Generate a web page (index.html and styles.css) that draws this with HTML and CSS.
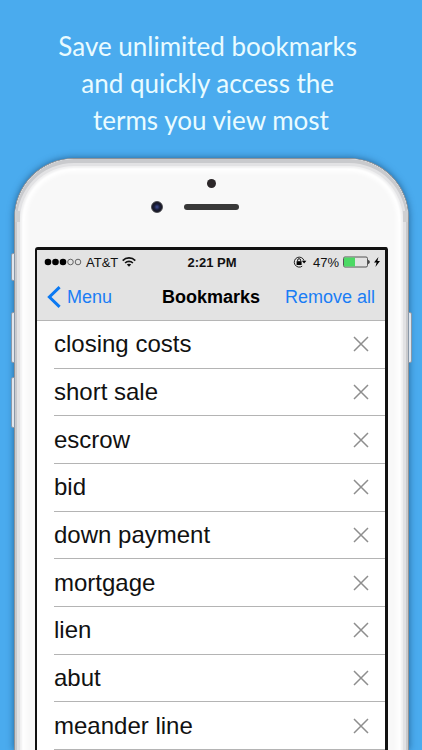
FILE: index.html
```html
<!DOCTYPE html>
<html lang="en">
<head>
    <meta charset="UTF-8">
    <meta name="viewport" content="width=device-width, initial-scale=1.0">
    <title>Bookmarks</title>
    <link rel="stylesheet" href="styles.css">
</head>
<body>
    <h1 class="headline">Save unlimited bookmarks&nbsp;<br>and quickly access the&nbsp;<br>terms you view most</h1>

    <main class="phone">
        <div class="rim"></div>
        <span class="side-button mute"></span>
        <span class="side-button volume-up"></span>
        <span class="side-button volume-down"></span>
        <span class="side-button power"></span>
        <span class="antenna antenna-left"></span>
        <span class="antenna antenna-right"></span>

        <div class="bezel">
            <span class="sensor"></span>
            <div class="earpiece">
                <span class="camera"></span>
                <span class="speaker"></span>
            </div>
        </div>

        <div class="screen">
            <header class="top-bar">
                <div class="status">
                    <div class="status-left">
                        <svg width="38" height="8" viewBox="0 0 38 8">
                            <circle cx="4" cy="4" r="3.3"/>
                            <circle cx="11.5" cy="4" r="3.3"/>
                            <circle cx="19" cy="4" r="3.3"/>
                            <circle cx="26.5" cy="4" r="2.8" fill="none" stroke="#444" stroke-width="0.8"/>
                            <circle cx="34" cy="4" r="2.8" fill="none" stroke="#444" stroke-width="0.8"/>
                        </svg>
                        <span class="carrier">AT&amp;T</span>
                        <svg width="14" height="10" viewBox="0 0 14 10" fill="none" stroke="#111" stroke-width="1.6">
                            <path d="M0.7 3.6 C4.2 0 9.8 0 13.3 3.6"/>
                            <path d="M3.1 6 C5.3 3.8 8.7 3.8 10.9 6"/>
                            <path d="M7 9.8 L4.8 7.6 C6 6.4 8 6.4 9.2 7.6 Z" fill="#111" stroke="none"/>
                        </svg>
                    </div>
                    <span class="time">2:21 PM</span>
                    <div class="status-right">
                        <svg width="14" height="12" viewBox="0 0 14 12">
                            <path d="M11 4.5 A5 5 0 1 0 9.2 10.2" fill="none" stroke="#222" stroke-width="1"/>
                            <path d="M8.8 4.8 H13.4 L11.1 7.6 Z"/>
                            <rect x="3.6" y="5.2" width="5" height="3.8"/>
                            <path d="M4.6 5.4 V4.2 A1.5 1.5 0 0 1 7.6 4.2 V5.4" fill="none" stroke="#111" stroke-width="1"/>
                        </svg>
                        <span class="percent">47%</span>
                        <svg width="27" height="12" viewBox="0 0 27 12">
                            <rect x="0.5" y="1" width="24" height="10" rx="1.5" fill="none" stroke="#555" stroke-width="1"/>
                            <rect x="1" y="1.5" width="11" height="9" fill="#4cd964"/>
                            <path d="M25.3 4 C27 4.4 27 7.6 25.3 8 Z"/>
                        </svg>
                        <svg width="6" height="10" viewBox="0 0 6 10">
                            <path d="M4.4 0 L0 5.6 H2.6 L1.4 10 L6 4 H3.4 Z"/>
                        </svg>
                    </div>
                </div>
                <nav class="nav">
                    <a class="back" href="#">
                        <svg width="14" height="22" viewBox="0 0 14 22" fill="none" stroke="#0b79f2" stroke-width="3">
                            <path d="M12.6 1.2 L2.4 11 L12.6 20.8"/>
                        </svg>
                        Menu
                    </a>
                    <h2 class="title">Bookmarks</h2>
                    <button class="remove-all" type="button">Remove all</button>
                </nav>
            </header>

            <ul class="bookmarks">
                <li><span>closing costs</span><button type="button" aria-label="Remove closing costs"><svg width="16" height="16" viewBox="0 0 16 16"><path d="M1 1 L15 15 M15 1 L1 15"/></svg></button></li>
                <li><span>short sale</span><button type="button" aria-label="Remove short sale"><svg width="16" height="16" viewBox="0 0 16 16"><path d="M1 1 L15 15 M15 1 L1 15"/></svg></button></li>
                <li><span>escrow</span><button type="button" aria-label="Remove escrow"><svg width="16" height="16" viewBox="0 0 16 16"><path d="M1 1 L15 15 M15 1 L1 15"/></svg></button></li>
                <li><span>bid</span><button type="button" aria-label="Remove bid"><svg width="16" height="16" viewBox="0 0 16 16"><path d="M1 1 L15 15 M15 1 L1 15"/></svg></button></li>
                <li><span>down payment</span><button type="button" aria-label="Remove down payment"><svg width="16" height="16" viewBox="0 0 16 16"><path d="M1 1 L15 15 M15 1 L1 15"/></svg></button></li>
                <li><span>mortgage</span><button type="button" aria-label="Remove mortgage"><svg width="16" height="16" viewBox="0 0 16 16"><path d="M1 1 L15 15 M15 1 L1 15"/></svg></button></li>
                <li><span>lien</span><button type="button" aria-label="Remove lien"><svg width="16" height="16" viewBox="0 0 16 16"><path d="M1 1 L15 15 M15 1 L1 15"/></svg></button></li>
                <li><span>abut</span><button type="button" aria-label="Remove abut"><svg width="16" height="16" viewBox="0 0 16 16"><path d="M1 1 L15 15 M15 1 L1 15"/></svg></button></li>
                <li><span>meander line</span><button type="button" aria-label="Remove meander line"><svg width="16" height="16" viewBox="0 0 16 16"><path d="M1 1 L15 15 M15 1 L1 15"/></svg></button></li>
            </ul>
        </div>
    </main>
</body>
</html>
```

FILE: styles.css
```css
* {
    box-sizing: border-box;
}

body {
    margin: 0;
    min-height: 100vh;
    display: flex;
    flex-direction: column;
    background: #4aabee;
    font-family: "Liberation Sans", Arial, sans-serif;
    color: #111;
}

.headline {
    margin: 0;
    padding: 28px 0 19px;
    font-family: Lato, sans-serif;
    font-size: 26px;
    font-weight: 400;
    line-height: 37px;
    text-align: center;
    color: #e9fbff;
}

/* Phone body */
.phone {
    position: relative;
    isolation: isolate;
    flex: 1;
    display: flex;
    flex-direction: column;
    margin: 0 13px 0 14px;
    padding: 0 20px;
    border: solid #8f9296;
    border-width: 1px 1px 0;
    border-radius: 60px 60px 0 0;
    background: #f8f8f8;
    box-shadow: 0 0 7px rgba(10, 50, 90, 0.6);
}

/* Metal edge, cut off at the bottom of the page */
.rim {
    position: absolute;
    inset: 0;
    z-index: -1;
    overflow: hidden;
    border-radius: 59px 59px 0 0;
}

.rim::before {
    content: "";
    position: absolute;
    inset: 0 0 -30px;
    border-radius: 59px 59px 0 0;
    box-shadow:
        inset 0 2px 0 2px #c9cacd,
        inset 0 2px 0 5px #e2e2e4,
        inset 0 2px 2px 7px #f0f0f1,
        inset 0 2px 4px 11px #ffffff;
}

.side-button {
    position: absolute;
    width: 4px;
    height: 51px;
    border: 1px solid #8a98a8;
    background: #dfe6ee;
}

.mute,
.volume-up,
.volume-down {
    left: -4px;
    border-radius: 2px 0 0 2px;
}

.mute {
    top: 94px;
    height: 28px;
}

.volume-up {
    top: 153px;
}

.volume-down {
    top: 218px;
}

.power {
    top: 153px;
    right: -4px;
    border-radius: 0 2px 2px 0;
}

.antenna {
    position: absolute;
    top: 52px;
    width: 5px;
    height: 11px;
    background: #cfd0d2;
}

.antenna-left {
    left: 0;
}

.antenna-right {
    right: 0;
}

.bezel {
    height: 88px;
    padding-top: 20px;
    display: flex;
    flex-direction: column;
    align-items: center;
    gap: 13px;
}

.sensor {
    width: 9px;
    height: 9px;
    border-radius: 50%;
    background: #2c2729;
}

.earpiece {
    width: 100%;
    display: grid;
    grid-template-columns: 1fr auto 1fr;
    column-gap: 21px;
    align-items: center;
}

.camera {
    justify-self: end;
    width: 12px;
    height: 12px;
    border: 1px solid #4a4a52;
    border-radius: 50%;
    background: radial-gradient(circle, #3f4f96 0, #1a1d3a 40%, #17171f 70%);
}

.speaker {
    width: 55px;
    height: 6px;
    border-radius: 3px;
    background: #383838;
}

/* Screen */
.screen {
    flex: 1;
    display: flex;
    flex-direction: column;
    border: solid #111;
    border-width: 3px 3px 0 2px;
    border-radius: 3px 3px 0 0;
    background: #fff;
}

.top-bar {
    border-bottom: 1px solid #b5b5b5;
    background: #e3e3e3;
}

.status {
    height: 24px;
    padding: 0 5px 0 7px;
    display: grid;
    grid-template-columns: 1fr auto 1fr;
    align-items: center;
    font-size: 13px;
}

.status-left,
.status-right {
    display: flex;
    align-items: center;
    gap: 4px;
}

.status-right {
    justify-content: flex-end;
}

.percent {
    margin-left: 2px;
}

.time {
    font-weight: 700;
}

.nav {
    height: 46px;
    padding: 0 10px;
    display: grid;
    grid-template-columns: 1fr auto 1fr;
    align-items: center;
    font-size: 18px;
}

.back {
    display: flex;
    align-items: center;
    gap: 6px;
    color: #1a7df5;
    text-decoration: none;
}

.title {
    margin: 0;
    font-size: 18px;
    font-weight: 700;
    color: #000;
}

.remove-all {
    justify-self: end;
    padding: 0;
    border: none;
    background: none;
    font: inherit;
    color: #1a7df5;
    white-space: nowrap;
    cursor: pointer;
}

.bookmarks {
    flex: 1;
    display: flex;
    flex-direction: column;
    margin: 0;
    padding: 0 0 0 17px;
    list-style: none;
}

.bookmarks li {
    flex: 1;
    min-height: 44px;
    padding-right: 16px;
    display: flex;
    align-items: center;
    justify-content: space-between;
    border-bottom: 1px solid #b4b4b4;
    font-size: 24px;
    line-height: 28px;
}

.bookmarks button {
    display: flex;
    padding: 0;
    border: none;
    background: none;
    cursor: pointer;
}

.bookmarks path {
    stroke: #8e8e8e;
    stroke-width: 1.5;
}
```
